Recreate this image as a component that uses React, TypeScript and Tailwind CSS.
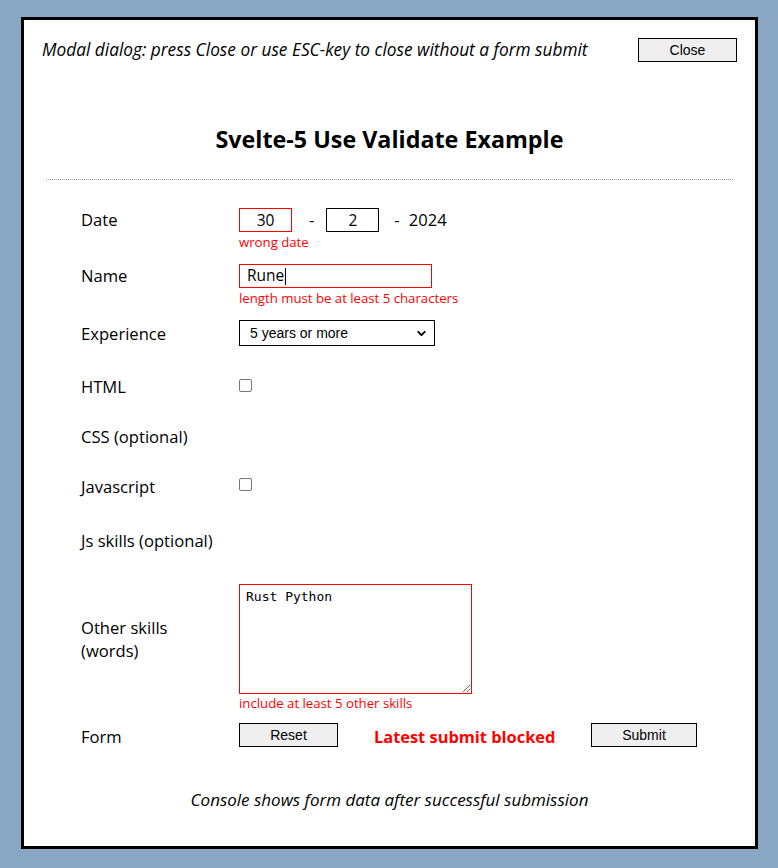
import { ChevronDown } from "lucide-react";

const labelFont = "font-['Open_Sans',sans-serif]";

function Checkbox() {
  return <span className="mt-[4px] block h-[13px] w-[13px] rounded-[2px] border border-[#767676] bg-white" />;
}

function Row({ label, h, children }: { label: React.ReactNode; h: string; children?: React.ReactNode }) {
  return (
    <div className={`grid grid-cols-[158px_1fr] ${h}`}>
      <div className="text-[16.6px] leading-[24px] text-black">{label}</div>
      <div>{children}</div>
    </div>
  );
}

export default function App() {
  return (
    <div className={`min-h-[868px] bg-[#8aa6c5] pl-[21px] pt-[17px] ${labelFont}`}>
      <div className="h-[832px] w-[737px] border-[3px] border-black bg-white">
        {/* header */}
        <div className="flex items-center justify-between pl-[18px] pr-[18px] pt-[18px]">
          <p className="text-[17.3px] italic leading-[24px]">
            Modal dialog: press Close or use ESC-key to close without a form submit
          </p>
          <button className="h-[24px] w-[99px] border border-black bg-[#efefef] font-['Liberation_Sans',sans-serif] text-[14px]">
            Close
          </button>
        </div>

        <h1 className="mt-[60px] text-center text-[23.3px] font-bold leading-[34px]">Svelte-5 Use Validate Example</h1>

        <div className="mx-[22px] mt-[23px] border-t border-dotted border-[#9a9a9a]" />

        {/* form */}
        <div className="mt-[28px] pl-[57px]">
          <Row label="Date" h="h-[56px]">
            <div className="flex items-center text-[16.6px] leading-[24px]">
              <input
                readOnly
                value="30"
                className="h-[24px] w-[53px] border border-[#ff0000] text-center text-[15.5px] outline-none"
              />
              <span className="ml-[17px]">-</span>
              <input
                readOnly
                value="2"
                className="ml-[12px] h-[24px] w-[53px] border border-black text-center text-[15.5px] outline-none"
              />
              <span className="ml-[15px]">-</span>
              <span className="ml-[9px]">2024</span>
            </div>
            <p className="mt-[1px] text-[13.2px] leading-[18px] text-[#ff0000]">wrong date</p>
          </Row>

          <Row label="Name" h="h-[56px]">
            <div className="flex h-[24px] w-[193px] items-center border border-[#ff0000] px-[7px] text-[15.5px]">
              Rune
              <span className="ml-[1px] h-[17px] w-[1px] bg-black" />
            </div>
            <p className="mt-[1px] text-[13.2px] leading-[18px] text-[#ff0000]">length must be at least 5 characters</p>
          </Row>

          <Row label={<span className="block pt-[2px]">Experience</span>} h="h-[55px]">
            <div className="relative flex h-[26px] w-[196px] items-center border border-black pl-[10px] font-['Liberation_Sans',sans-serif] text-[14px]">
              5 years or more
              <ChevronDown size={13} strokeWidth={3.5} className="absolute right-[6px] top-[6px]" />
            </div>
          </Row>

          <Row label="HTML" h="h-[50px]">
            <Checkbox />
          </Row>

          <Row label="CSS (optional)" h="h-[50px]" />

          <Row label="Javascript" h="h-[54px]">
            <span className="-mt-[1px] block">
              <Checkbox />
            </span>
          </Row>

          <Row label="Js skills (optional)" h="h-[55px]" />

          <div className="grid h-[139px] grid-cols-[158px_1fr]">
            <div className="flex h-[110px] items-center text-[16.6px] leading-[23px]">
              <span>
                Other skills
                <br />
                (words)
              </span>
            </div>
            <div>
              <textarea
                readOnly
                value="Rust Python"
                className="block h-[110px] w-[233px] border border-[#ff0000] px-[6px] py-[2px] font-['DejaVu_Sans_Mono',monospace] text-[13px] outline-none"
              />
              <p className="text-[13.2px] leading-[19px] text-[#ff0000]">include at least 5 other skills</p>
            </div>
          </div>

          <div className="grid h-[24px] grid-cols-[158px_1fr]">
            <div className="text-[16.6px] leading-[28px]">Form</div>
            <div className="flex h-[24px] items-center">
              <button className="h-[24px] w-[99px] border border-black bg-[#efefef] font-['Liberation_Sans',sans-serif] text-[14px]">
                Reset
              </button>
              <span className="ml-[36px] w-[217px] pt-[3px] text-[16.4px] font-bold leading-[24px] text-[#ff0000]">
                Latest submit blocked
              </span>
              <button className="h-[24px] w-[106px] border border-black bg-[#efefef] font-['Liberation_Sans',sans-serif] text-[14px]">
                Submit
              </button>
            </div>
          </div>
        </div>

        <p className="mt-[41px] text-center text-[17px] italic leading-[24px]">
          Console shows form data after successful submission
        </p>
      </div>
    </div>
  );
}
